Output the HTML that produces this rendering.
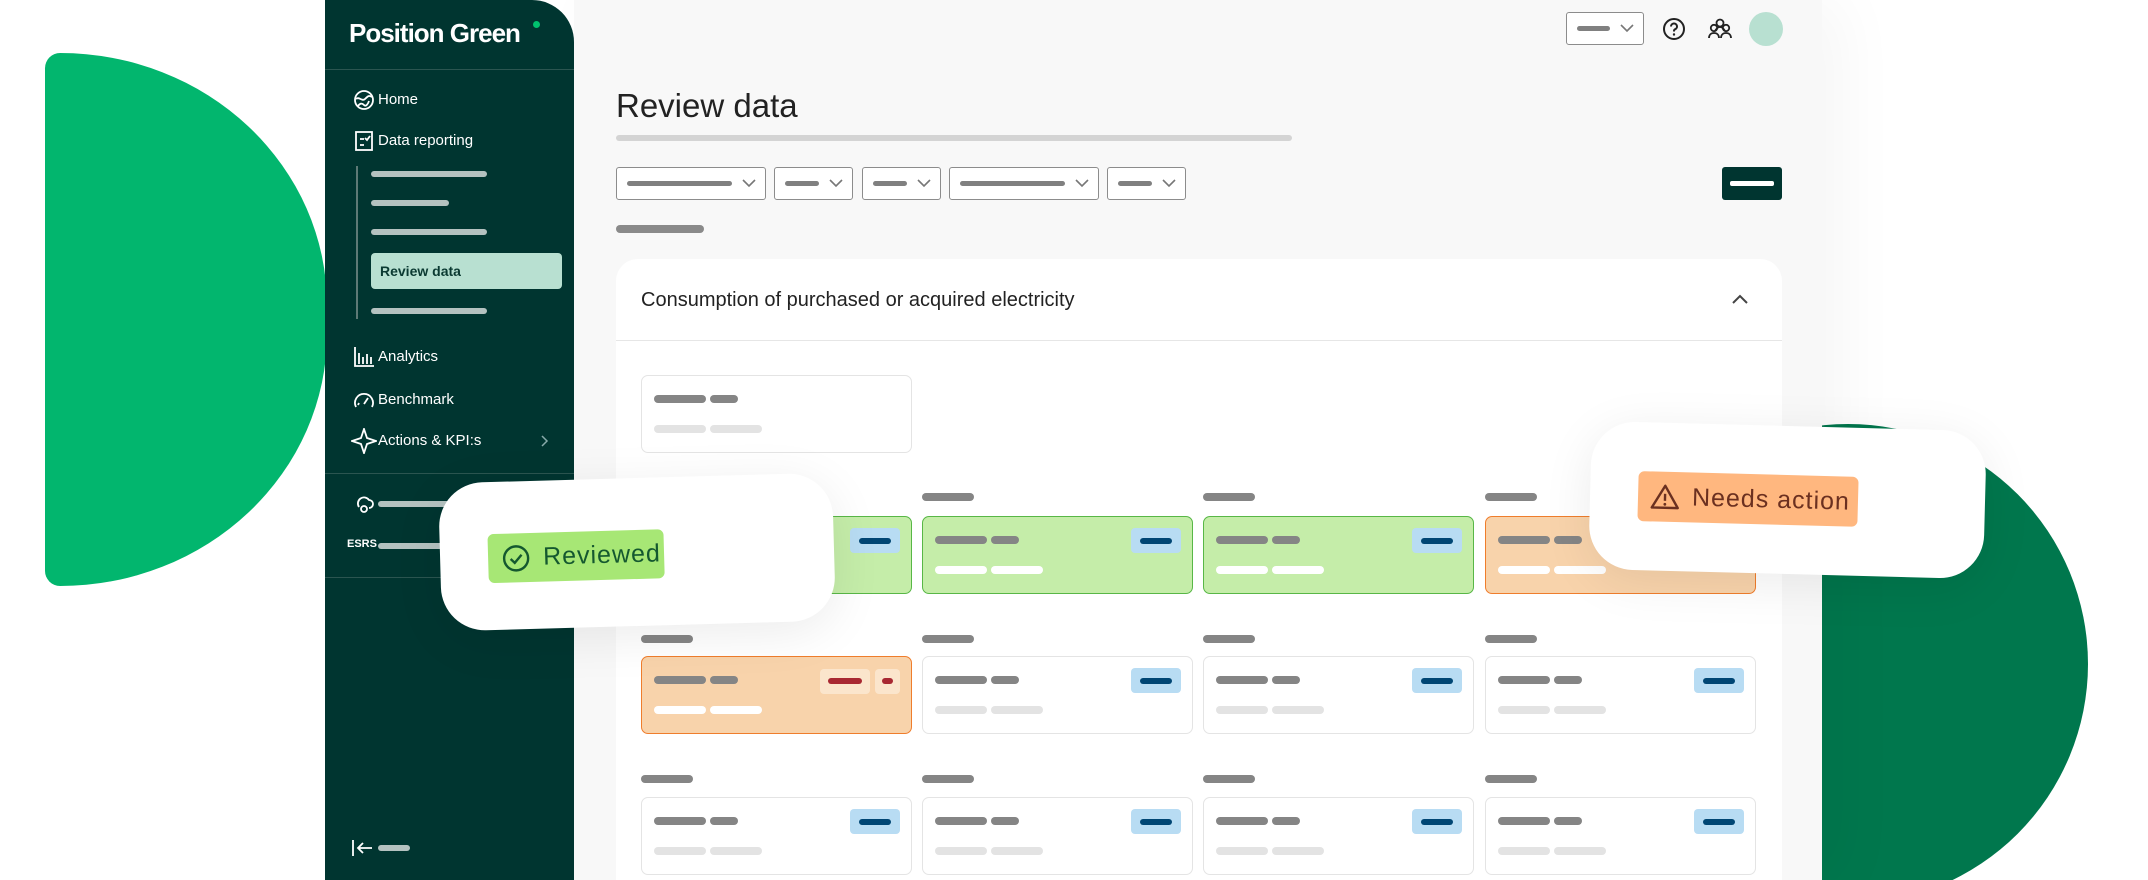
<!DOCTYPE html>
<html style="width:2148px;height:880px;overflow:hidden"><head><meta charset="utf-8"><style>
*{box-sizing:border-box;margin:0;padding:0}
html,body{width:2148px;height:880px;overflow:hidden}
body{background:#fff;font-family:"Liberation Sans",sans-serif;position:relative}
#wrap{position:relative;width:2148px;height:880px;overflow:hidden}
.a{position:absolute}
.sb{left:325px;top:0;width:249px;height:880px;background:#003530;border-top-right-radius:42px}
.nav{position:absolute;left:53px;color:#fff;font-size:15px;line-height:18px}
.ic{position:absolute;left:28px}
.sbar{position:absolute;height:6px;border-radius:3px;background:#b4c2c0}
.hr{position:absolute;left:0;width:249px;height:1px;background:#2b5550}
.panel{left:574px;top:0;width:1248px;height:880px;background:#f8f8f8}
.dd{position:absolute;top:167px;height:33px;border:1.5px solid #8c8c8c;border-radius:3px;background:#fff}
.dd i{position:absolute;left:10px;top:13px;height:5px;border-radius:3px;background:#808080}
.dd svg{position:absolute;right:8px;top:10px}
.card{position:absolute;width:271px;height:78px;border-radius:7px;border:1.5px solid #e4e4e4;background:#fff}
.g{background:#c5eda9;border-color:#58b746}
.o{background:#f8d3ab;border-color:#ef7d2c}
.card .b1,.card .b2,.card .l1,.card .l2{position:absolute;height:8px;border-radius:4px}
.b1{left:12px;top:19px;width:52px;background:#858585}
.b2{left:68px;top:19px;width:28px;background:#858585}
.l1{left:12px;top:49px;width:52px;background:#e3e3e3}
.l2{left:68px;top:49px;width:52px;background:#e3e3e3}
.g .l1,.g .l2,.o .l1,.o .l2{background:#fff}
.bd{position:absolute;right:11px;top:11px;width:50px;height:25px;border-radius:4px;background:#b8dcf3}
.bd:after{content:"";position:absolute;left:9px;top:10px;width:32px;height:6px;border-radius:3px;background:#004674}
.lab{position:absolute;width:52px;height:8px;border-radius:4px;background:#858585}
</style></head><body><div id="wrap">

<div class="a" style="left:45px;top:53px;width:282px;height:533px;background:#02b66e;border-radius:16px 100% 100% 16px / 16px 50% 50% 16px"></div>
<svg class="a" style="left:1608px;top:424px" width="480" height="456" viewBox="0 0 480 456"><circle cx="240" cy="240" r="240" fill="#00774d"/></svg>

<div class="a panel" style="box-shadow:20px 0 60px rgba(0,0,0,0.04)"></div>

<div class="dd" style="left:1566px;top:12px;width:78px;height:33px"><i style="left:10px;top:13px;width:33px"></i><svg width="16" height="10" viewBox="0 0 16 10"><path d="M2 2l6 6 6-6" fill="none" stroke="#777" stroke-width="1.6"/></svg></div>
<svg class="a" style="left:1662px;top:17px" width="24" height="24" viewBox="0 0 24 24"><circle cx="12" cy="12" r="10" fill="none" stroke="#222" stroke-width="2"/><path d="M9 9.5a3 3 0 1 1 4.2 2.7c-.8.4-1.2 1-1.2 1.8v.5" fill="none" stroke="#222" stroke-width="2"/><circle cx="12" cy="17.5" r="1.2" fill="#222"/></svg>
<svg class="a" style="left:1707px;top:17px" width="26" height="24" viewBox="0 0 26 24"><g fill="none" stroke="#222" stroke-width="1.8"><circle cx="13" cy="6" r="3.5"/><circle cx="7" cy="11" r="3.2"/><circle cx="19" cy="11" r="3.2"/><path d="M2 21c0-3 2-5 5-5s5 2 5 5M14 21c0-3 2-5 5-5s5 2 5 5M8 14c1-2 3-4 5-4s4 2 5 4"/></g></svg>
<div class="a" style="left:1749px;top:12px;width:34px;height:34px;border-radius:50%;background:#b8e0d1"></div>

<div class="a" style="left:616px;top:86px;font-size:33px;color:#222;line-height:40px">Review data</div>
<div class="a" style="left:616px;top:135px;width:676px;height:6px;border-radius:3px;background:#d4d4d4"></div>

<div class="dd" style="left:616px;width:150px"><i style="width:105px"></i><svg width="16" height="10" viewBox="0 0 16 10"><path d="M2 2l6 6 6-6" fill="none" stroke="#777" stroke-width="1.6"/></svg></div>
<div class="dd" style="left:774px;width:79px"><i style="width:34px"></i><svg width="16" height="10" viewBox="0 0 16 10"><path d="M2 2l6 6 6-6" fill="none" stroke="#777" stroke-width="1.6"/></svg></div>
<div class="dd" style="left:862px;width:79px"><i style="width:34px"></i><svg width="16" height="10" viewBox="0 0 16 10"><path d="M2 2l6 6 6-6" fill="none" stroke="#777" stroke-width="1.6"/></svg></div>
<div class="dd" style="left:949px;width:150px"><i style="width:105px"></i><svg width="16" height="10" viewBox="0 0 16 10"><path d="M2 2l6 6 6-6" fill="none" stroke="#777" stroke-width="1.6"/></svg></div>
<div class="dd" style="left:1107px;width:79px"><i style="width:34px"></i><svg width="16" height="10" viewBox="0 0 16 10"><path d="M2 2l6 6 6-6" fill="none" stroke="#777" stroke-width="1.6"/></svg></div>
<div class="a" style="left:1722px;top:167px;width:60px;height:33px;border-radius:3px;background:#003530"><div class="a" style="left:8px;top:14px;width:44px;height:5px;background:#fff;border-radius:2px"></div></div>
<div class="a" style="left:616px;top:225px;width:88px;height:8px;border-radius:4px;background:#8a8a8a"></div>

<div class="a" style="left:616px;top:259px;width:1166px;height:621px;background:#fff;border-radius:22px 22px 0 0">
  <div class="a" style="left:25px;top:30px;font-size:20px;color:#222">Consumption of purchased or acquired electricity</div>
  <svg class="a" style="left:1114px;top:33px" width="20" height="14" viewBox="0 0 20 14"><path d="M3 11l7-7 7 7" fill="none" stroke="#444" stroke-width="2"/></svg>
  <div class="a" style="left:0;top:81px;width:1166px;height:1px;background:#e6e6e6"></div>
</div>

<div class="card" style="left:641px;top:375px"><i class="b1"></i><i class="b2"></i><i class="l1"></i><i class="l2"></i></div>

<div class="lab" style="left:922px;top:493px"></div><div class="lab" style="left:1203px;top:493px"></div><div class="lab" style="left:1485px;top:493px"></div>
<div class="card g" style="left:641px;top:516px"><i class="b1"></i><i class="b2"></i><i class="l1"></i><i class="l2"></i><span class="bd"></span></div>
<div class="card g" style="left:922px;top:516px"><i class="b1"></i><i class="b2"></i><i class="l1"></i><i class="l2"></i><span class="bd"></span></div>
<div class="card g" style="left:1203px;top:516px"><i class="b1"></i><i class="b2"></i><i class="l1"></i><i class="l2"></i><span class="bd"></span></div>
<div class="card o" style="left:1485px;top:516px"><i class="b1"></i><i class="b2"></i><i class="l1"></i><i class="l2"></i></div>

<div class="lab" style="left:641px;top:635px"></div><div class="lab" style="left:922px;top:635px"></div><div class="lab" style="left:1203px;top:635px"></div><div class="lab" style="left:1485px;top:635px"></div>
<div class="card o" style="left:641px;top:656px"><i class="b1"></i><i class="b2"></i><i class="l1"></i><i class="l2"></i>
  <span class="a" style="left:178px;top:12px;width:50px;height:25px;border-radius:4px;background:#fbe5cc"><span class="a" style="left:8px;top:9px;width:34px;height:6px;border-radius:3px;background:#a82832"></span></span>
  <span class="a" style="left:233px;top:12px;width:25px;height:25px;border-radius:4px;background:#fbe5cc"><span class="a" style="left:7px;top:9px;width:11px;height:6px;border-radius:3px;background:#a82832"></span></span>
</div>
<div class="card" style="left:922px;top:656px"><i class="b1"></i><i class="b2"></i><i class="l1"></i><i class="l2"></i><span class="bd"></span></div>
<div class="card" style="left:1203px;top:656px"><i class="b1"></i><i class="b2"></i><i class="l1"></i><i class="l2"></i><span class="bd"></span></div>
<div class="card" style="left:1485px;top:656px"><i class="b1"></i><i class="b2"></i><i class="l1"></i><i class="l2"></i><span class="bd"></span></div>

<div class="lab" style="left:641px;top:775px"></div><div class="lab" style="left:922px;top:775px"></div><div class="lab" style="left:1203px;top:775px"></div><div class="lab" style="left:1485px;top:775px"></div>
<div class="card" style="left:641px;top:797px"><i class="b1"></i><i class="b2"></i><i class="l1"></i><i class="l2"></i><span class="bd"></span></div>
<div class="card" style="left:922px;top:797px"><i class="b1"></i><i class="b2"></i><i class="l1"></i><i class="l2"></i><span class="bd"></span></div>
<div class="card" style="left:1203px;top:797px"><i class="b1"></i><i class="b2"></i><i class="l1"></i><i class="l2"></i><span class="bd"></span></div>
<div class="card" style="left:1485px;top:797px"><i class="b1"></i><i class="b2"></i><i class="l1"></i><i class="l2"></i><span class="bd"></span></div>

<div class="a sb">
  <div class="a" style="left:24px;top:18px;font-size:26px;font-weight:bold;color:#fff;letter-spacing:-1px;line-height:30px">Position Green</div>
  <div class="a" style="left:208px;top:21px;width:7px;height:7px;border-radius:50%;background:#00c16e"></div>
  <div class="hr" style="top:69px"></div>

  <svg class="ic" style="top:89px" width="22" height="22" viewBox="0 0 22 22"><g fill="none" stroke="#fff" stroke-width="1.8"><circle cx="11" cy="11" r="9"/><path d="M3 10c3-3 6 3 9 0s4-4 7-2M5 17c2-3 4-3 6-1s4-1 5-4"/></g></svg>
  <div class="nav" style="top:91px">Home</div>
  <svg class="ic" style="top:130px" width="22" height="22" viewBox="0 0 22 22"><g fill="none" stroke="#fff" stroke-width="1.8"><rect x="3" y="2" width="16" height="18"/><path d="M7 9h4M7 15h4M12 8l2 2 3-4"/></g></svg>
  <div class="nav" style="top:132px">Data reporting</div>

  <div class="a" style="left:31px;top:166px;width:2px;height:153px;background:#5d7a76"></div>
  <div class="sbar" style="left:46px;top:171px;width:116px"></div>
  <div class="sbar" style="left:46px;top:200px;width:78px"></div>
  <div class="sbar" style="left:46px;top:229px;width:116px"></div>
  <div class="a" style="left:46px;top:253px;width:191px;height:36px;border-radius:4px;background:#b8e0d1;color:#0b3a32;font-size:14px;font-weight:bold;line-height:36px;padding-left:9px">Review data</div>
  <div class="sbar" style="left:46px;top:308px;width:116px"></div>

  <svg class="ic" style="top:345px" width="22" height="22" viewBox="0 0 22 22"><g fill="none" stroke="#fff" stroke-width="1.8"><path d="M2 2v19h19M6 8v11M10 12v7M14 9v10M18 12v7"/></g></svg>
  <div class="nav" style="top:348px">Analytics</div>
  <svg class="ic" style="top:389px" width="22" height="22" viewBox="0 0 22 22"><g fill="none" stroke="#fff" stroke-width="1.8"><path d="M3 18a9 9 0 1 1 16 0M11 15l4-6M6 14l-1 2"/></g></svg>
  <div class="nav" style="top:391px">Benchmark</div>
  <svg class="ic" style="top:428px;left:26px" width="26" height="26" viewBox="0 0 26 26"><path d="M13 1l3 9 9 3-9 3-3 9-3-9-9-3 9-3z" fill="none" stroke="#fff" stroke-width="1.8"/></svg>
  <div class="nav" style="top:432px">Actions &amp; KPI:s</div>
  <svg class="a" style="left:214px;top:434px" width="10" height="14" viewBox="0 0 10 14"><path d="M3 2l5 5-5 5" fill="none" stroke="#8aa" stroke-width="1.5"/></svg>
  <div class="hr" style="top:473px"></div>

  <svg class="ic" style="top:491px" width="22" height="24" viewBox="0 0 22 24"><g fill="none" stroke="#fff" stroke-width="1.8"><path d="M6 16a6 6 0 1 1 10-7 4 4 0 0 1 0 8"/><circle cx="11" cy="18" r="3"/></g></svg>
  <div class="sbar" style="left:53px;top:501px;width:80px"></div>
  <div class="a" style="left:22px;top:538px;font-size:11px;font-weight:bold;color:#fff">ESRS</div>
  <div class="sbar" style="left:53px;top:543px;width:80px"></div>
  <div class="hr" style="top:577px"></div>

  <svg class="ic" style="top:838px;left:26px" width="24" height="20" viewBox="0 0 24 20"><path d="M2 2v16M21 10H7M12 5l-5 5 5 5" fill="none" stroke="#fff" stroke-width="1.8"/></svg>
  <div class="sbar" style="left:53px;top:845px;width:32px"></div>
</div>

<div class="a" style="left:440px;top:478px;width:394px;height:148px;background:#fff;border-radius:44px;transform:rotate(-1.6deg);box-shadow:0 10px 50px rgba(0,0,0,0.08)">
  <div class="a" style="left:48px;top:52px;width:176px;height:49px;border-radius:6px;background:#a7e775;color:#14582f;font-size:25px;line-height:49px;padding-left:55px;letter-spacing:1px">Reviewed</div>
  <svg class="a" style="left:62px;top:63px" width="28" height="28" viewBox="0 0 28 28"><circle cx="14" cy="14" r="12" fill="none" stroke="#14582f" stroke-width="2.4"/><path d="M8.5 14.5l4 4 7-8" fill="none" stroke="#14582f" stroke-width="2.4"/></svg>
</div>

<div class="a" style="left:1590px;top:426px;width:395px;height:148px;background:#fff;border-radius:44px;transform:rotate(1.5deg);box-shadow:0 10px 50px rgba(0,0,0,0.08)">
  <div class="a" style="left:48px;top:49px;width:220px;height:50px;border-radius:6px;background:#ffb77f;color:#6b3020;font-size:25px;line-height:50px;padding-left:54px;letter-spacing:1px">Needs action</div>
  <svg class="a" style="left:60px;top:60px" width="30" height="28" viewBox="0 0 30 28"><path d="M15 3L2 25h26z" fill="none" stroke="#6b3020" stroke-width="2.4" stroke-linejoin="round"/><path d="M15 11v7" stroke="#6b3020" stroke-width="2.4"/><circle cx="15" cy="21.5" r="1.4" fill="#6b3020"/></svg>
</div>

</div></body></html>
